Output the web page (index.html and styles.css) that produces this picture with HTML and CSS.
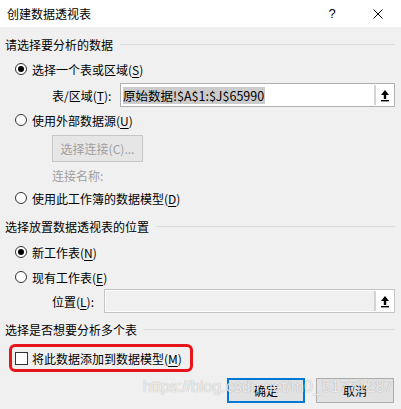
FILE: index.html
```html
<!DOCTYPE html>
<html lang="zh-CN">
<head>
  <meta charset="UTF-8">
  <title>创建数据透视表</title>
  <link rel="stylesheet" href="styles.css">
</head>
<body>
  <div class="titlebar">
    <span class="title">创建数据透视表</span>
    <span class="tb-btn help">?</span>
    <span class="tb-btn close">
      <svg width="10" height="10" viewBox="0 0 10 10"><path d="M0.5 0.5 L9.5 9.5 M9.5 0.5 L0.5 9.5" stroke="#000" stroke-width="1" fill="none"/></svg>
    </span>
  </div>

  <div class="dialog">
    <div class="legend legend-1">请选择要分析的数据</div>

    <div class="option opt-1"><span class="radio on"></span>选择一个表或区域(<u>S</u>)</div>

    <div class="field field-range">
      <span class="field-label range-label">表/区域(<u>T</u>):</span>
      <div class="input">
        <span class="value"><span class="selected">原始数据!$A$1:$J$65990</span></span>
        <span class="pick">
          <svg width="10" height="13" viewBox="0 0 10 13"><path d="M5 1 L1 6 L3.8 6 L3.8 10 L6.2 10 L6.2 6 L9 6 Z" fill="#000"/><rect x="1" y="11" width="8" height="1.4" fill="#000"/></svg>
        </span>
      </div>
    </div>

    <div class="option opt-2"><span class="radio"></span>使用外部数据源(<u>U</u>)</div>

    <div class="connect">选择连接(C)...</div>
    <div class="conn-name">连接名称:</div>

    <div class="option opt-3"><span class="radio"></span>使用此工作簿的数据模型(<u>D</u>)</div>

    <div class="legend legend-2">选择放置数据透视表的位置</div>

    <div class="option opt-4"><span class="radio on"></span>新工作表(<u>N</u>)</div>
    <div class="option opt-5"><span class="radio"></span>现有工作表(<u>E</u>)</div>

    <div class="field field-location">
      <span class="field-label loc-label">位置(<u>L</u>):</span>
      <div class="input disabled">
        <span class="value"></span>
        <span class="pick">
          <svg width="10" height="13" viewBox="0 0 10 13"><path d="M5 1 L1 6 L3.8 6 L3.8 10 L6.2 10 L6.2 6 L9 6 Z" fill="#000"/><rect x="1" y="11" width="8" height="1.4" fill="#000"/></svg>
        </span>
      </div>
    </div>

    <div class="legend legend-3">选择是否想要分析多个表</div>

    <div class="check-row">
      <span class="checkbox"></span>将此数据添加到数据模型(<u>M</u>)
    </div>

    <div class="actions">
      <span class="btn primary">确定</span>
      <span class="btn">取消</span>
    </div>
  </div>

  <div class="watermark">https://blog.csdn.net/m0_51771287</div>
</body>
</html>
```

FILE: styles.css
```css
body {
  margin: 0;
  width: 401px;
  height: 409px;
  overflow: hidden;
  position: relative;
  background: #f0f0f0;
  color: #000;
  font-family: "Noto Sans CJK SC", "Liberation Sans", sans-serif;
  font-size: 12px;
}
u {
  text-decoration-thickness: 1px;
  text-underline-offset: 2px;
}

.titlebar {
  height: 27px;
  background: #fff;
  display: flex;
  align-items: center;
  padding-left: 7px;
}
.title {
  flex: 1;
}
.tb-btn {
  width: 46px;
  height: 27px;
  display: flex;
  align-items: center;
  justify-content: center;
}
.help {
  font-family: "Liberation Sans", sans-serif;
  font-size: 13px;
}

.dialog {
  padding: 0 6px 0 5px;
}

.legend {
  display: flex;
  align-items: center;
  height: 18px;
}
.legend::after {
  content: "";
  flex: 1;
  height: 1px;
  margin-left: 7px;
  background: #dcdcdc;
}
.legend-1 { margin-top: 8px; }
.legend-2 { margin-top: 9px; }
.legend-3 { margin-top: 7px; }

.option {
  display: flex;
  align-items: center;
  height: 20px;
  padding-left: 10px;
}
.opt-1 { margin-top: 6px; }
.opt-2 { margin-top: 3px; }
.opt-3 { margin-top: 3px; }
.opt-4 { margin-top: 7px; }
.opt-5 { margin-top: 5px; }

.radio {
  width: 12px;
  height: 12px;
  box-sizing: border-box;
  border: 1px solid #333;
  border-radius: 50%;
  background: #fff;
  margin-right: 5px;
  display: flex;
  align-items: center;
  justify-content: center;
}
.radio.on::after {
  content: "";
  width: 6px;
  height: 6px;
  border-radius: 50%;
  background: #000;
}

.field {
  display: flex;
  align-items: center;
  height: 24px;
  padding-left: 47px;
}
.field-range { margin-top: 4px; }
.field-location { margin-top: 2px; }
.range-label { width: 68px; }
.loc-label { width: 52px; }

.input {
  flex: 1;
  height: 24px;
  box-sizing: border-box;
  border: 1px solid #b0b0b0;
  background: #fff;
  display: flex;
}
.input .value {
  flex: 1;
  display: flex;
  align-items: center;
  padding-left: 2px;
}
.selected {
  background: #cccccc;
  font-size: 12.5px;
  line-height: 17px;
  padding-right: 1px;
}
.input.disabled {
  background: #f0f0f0;
  border-color: #c4c4c4;
  box-shadow: inset 0 0 0 1px #fff;
}
.pick {
  width: 17px;
  margin: 1px;
  border-left: 2px solid #d4d4d4;
  background: #fff;
  display: flex;
  align-items: center;
  justify-content: center;
}

.connect {
  margin: 5px 0 0 47px;
  width: 91px;
  height: 27px;
  box-sizing: border-box;
  border: 1px solid #c6c6c6;
  background: #e6e6e6;
  color: #a0a0a0;
  display: flex;
  align-items: center;
  justify-content: center;
}
.conn-name {
  margin-top: 3px;
  height: 20px;
  padding-left: 47px;
  color: #a0a0a0;
  display: flex;
  align-items: center;
}

.check-row {
  margin: 6px 0 0 4px;
  width: 184px;
  height: 28px;
  box-sizing: border-box;
  border: 3px solid #e8141b;
  border-radius: 6px;
  padding-left: 3px;
  display: flex;
  align-items: center;
}
.checkbox {
  width: 13px;
  height: 13px;
  box-sizing: border-box;
  border: 1px solid #333;
  background: #fff;
  margin-right: 4px;
}

.actions {
  margin: 6px 1px 0 0;
  display: flex;
  justify-content: flex-end;
  gap: 11px;
}
.btn {
  width: 78px;
  height: 25px;
  box-sizing: border-box;
  border: 1px solid #adadad;
  background: #e1e1e1;
  display: flex;
  align-items: center;
  justify-content: center;
}
.btn.primary {
  border: 2px solid #0078d7;
}

.watermark {
  position: absolute;
  left: 143px;
  top: 378px;
  font-family: "Liberation Sans", sans-serif;
  font-size: 16px;
  color: rgba(255, 255, 255, 0.8);
  text-shadow: 0 0 1px rgba(0, 0, 0, 0.35);
  white-space: nowrap;
}
```
